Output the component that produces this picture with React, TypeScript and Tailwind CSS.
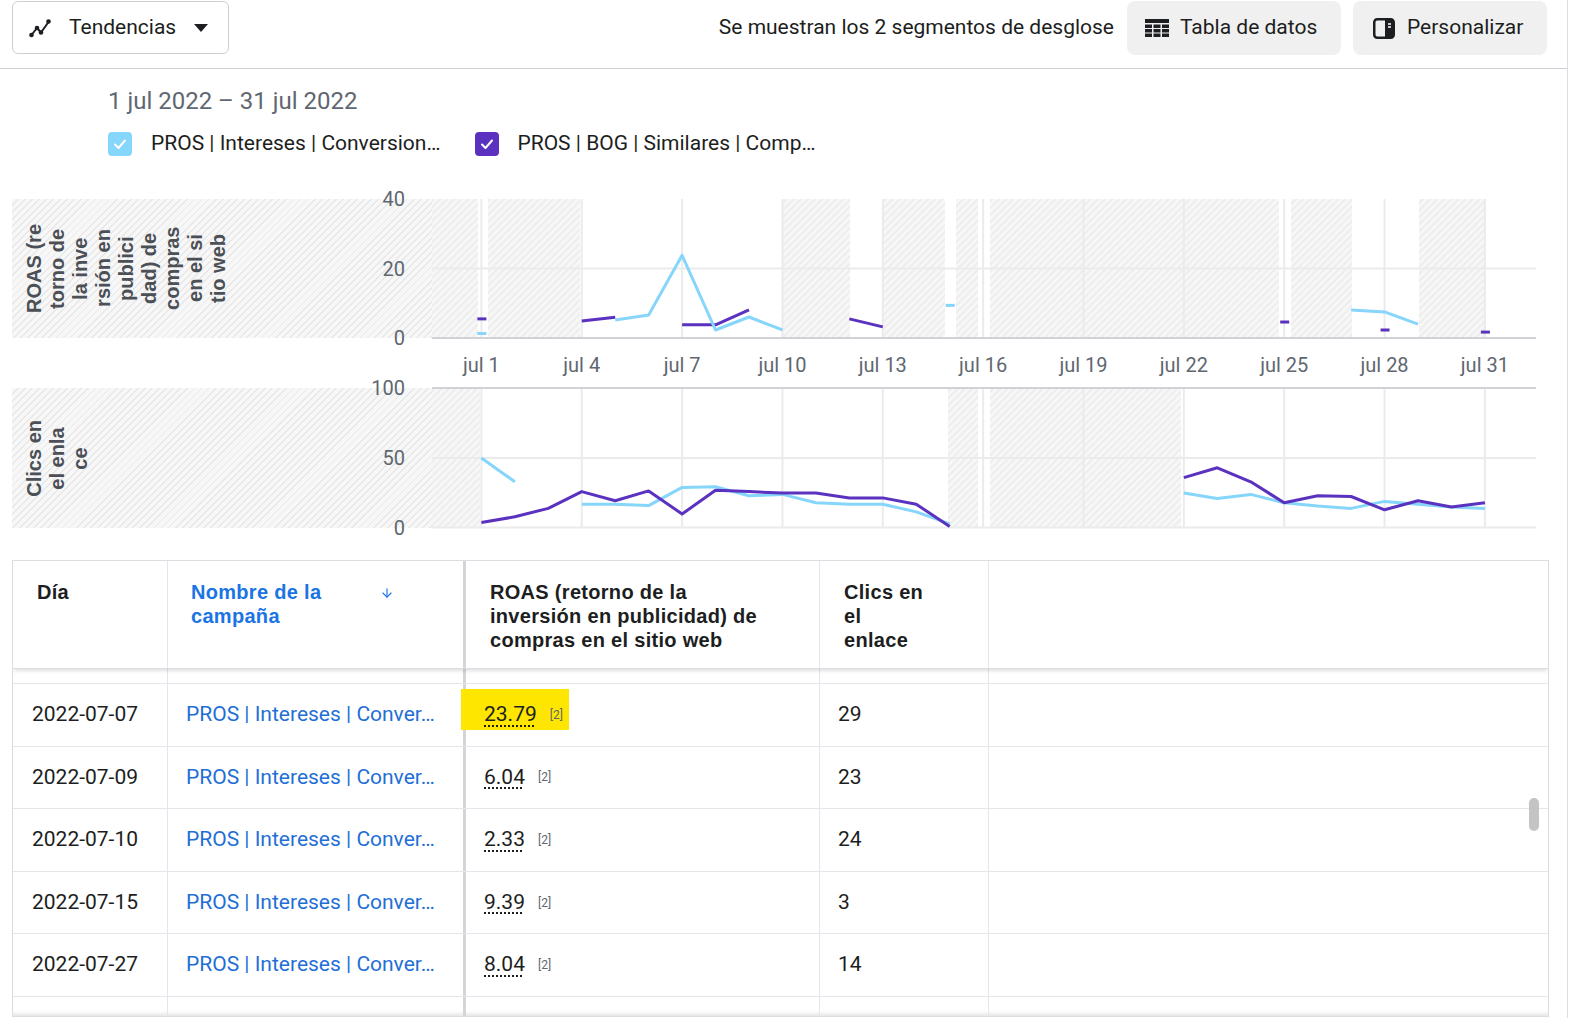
import { ArrowDown } from 'lucide-react';

type Pt = [number, number];

const BLUE = '#86d5fb';
const PURPLE = '#5a32bf';

// plot geometry (svg local coords: x 0 = page x 432, y 0 = page y 198)
const dayX = (d: number) => 49.4 + (d - 1) * 33.45;
const roasY = (v: number) => 139 - v * 3.475;
const clicksY = (v: number) => 329 - v * 1.4;

const roasBlue: Pt[][] = [
  [[1, 1.3]],
  [[5, 5.2], [6, 6.6], [7, 23.79], [8, 2.3], [9, 6.04], [10, 2.33]],
  [[15, 9.39]],
  [[27, 8.04], [28, 7.5], [29, 4.0]],
];
const roasPurple: Pt[][] = [
  [[1, 5.5]],
  [[4, 4.9], [5, 6.0]],
  [[7, 3.8], [8, 3.8], [9, 8.1]],
  [[12, 5.5], [13, 3.2]],
  [[25, 4.6]],
  [[28, 2.3]],
  [[31, 1.7]],
];
const clicksBlue: Pt[][] = [
  [[1, 50], [2, 33]],
  [[4, 17], [5, 17], [6, 16], [7, 29], [8, 29.5], [9, 23], [10, 24], [11, 18], [12, 17], [13, 17], [14, 11.5], [15, 3]],
  [[22, 25], [23, 21], [24, 24], [25, 18], [26, 15.7], [27, 14], [28, 19], [29, 17], [30, 15], [31, 14]],
];
const clicksPurple: Pt[][] = [
  [[1, 4], [2, 8], [3, 14], [4, 26], [5, 19.5], [6, 26.5], [7, 10], [8, 27], [9, 26], [10, 25], [11, 25], [12, 21.5], [13, 21.5], [14, 17], [15, 1]],
  [[22, 36], [23, 43], [24, 33], [25, 18], [26, 23], [27, 22.5], [28, 13], [29, 19.5], [30, 15], [31, 18]],
];

const hatchTop: Pt[] = [[0, 46], [56, 148], [351, 418], [451, 513], [524, 546], [558, 847], [859, 920], [987, 1053]];
const hatchBottom: Pt[] = [[0, 48], [516, 546], [558, 749]];
const tickDays = [1, 4, 7, 10, 13, 16, 19, 22, 25, 28, 31];

const rows = [
  { day: '2022-07-07', roas: '23.79', clicks: '29', highlight: true },
  { day: '2022-07-09', roas: '6.04', clicks: '23' },
  { day: '2022-07-10', roas: '2.33', clicks: '24' },
  { day: '2022-07-15', roas: '9.39', clicks: '3' },
  { day: '2022-07-27', roas: '8.04', clicks: '14' },
];

const col1 = 'w-[155px] shrink-0 border-r border-[#e4e6eb]';
const col2 = 'w-[298px] shrink-0 border-r-[3px] border-[#d3d5d8]';
const col3 = 'relative w-[354px] shrink-0 border-r border-[#e4e6eb]';
const col4 = 'w-[169px] shrink-0 border-r border-[#e4e6eb]';

function Series({ segments, yOf, color }: { segments: Pt[][]; yOf: (v: number) => number; color: string }) {
  return (
    <g fill="none" stroke={color} strokeWidth={3} strokeLinejoin="round">
      {segments.map((seg, i) =>
        seg.length === 1 ? (
          <line key={i} x1={dayX(seg[0][0]) - 4} x2={dayX(seg[0][0]) + 5} y1={yOf(seg[0][1])} y2={yOf(seg[0][1])} />
        ) : (
          <polyline key={i} points={seg.map(([d, v]) => `${dayX(d)},${yOf(v)}`).join(' ')} />
        ),
      )}
    </g>
  );
}

function AxisTitle({ lines }: { lines: string[] }) {
  return (
    <div className="rotate-180 whitespace-nowrap text-center font-['Liberation_Sans',Arial,sans-serif] text-[20px] font-bold leading-[23px] text-[#4b4f56] [writing-mode:vertical-rl]">
      {lines.map((l) => (
        <div key={l}>{l}</div>
      ))}
    </div>
  );
}

function Check({ color }: { color: string }) {
  return (
    <span className="flex h-6 w-6 items-center justify-center rounded-[4px]" style={{ backgroundColor: color }}>
      <svg width="16" height="16" viewBox="0 0 16 16" fill="none" stroke="white" strokeWidth="2" strokeLinecap="round" strokeLinejoin="round">
        <polyline points="3,8.5 6.5,12 13,4.5" />
      </svg>
    </span>
  );
}

function Chart() {
  return (
    <svg width={1104} height={329} className="block overflow-visible">
      <defs>
        <pattern id="hatch" width="5" height="5" patternUnits="userSpaceOnUse" patternTransform="rotate(45)">
          <rect width="5" height="5" fill="#f7f7f7" />
          <line x1="1" y1="0" x2="1" y2="5" stroke="#e8e8e8" strokeWidth="1.3" />
        </pattern>
      </defs>
      {hatchTop.map(([a, b]) => (
        <rect key={`t${a}`} x={a} y={0} width={b - a} height={139} fill="url(#hatch)" />
      ))}
      {hatchBottom.map(([a, b]) => (
        <rect key={`b${a}`} x={a} y={189} width={b - a} height={140} fill="url(#hatch)" />
      ))}
      <g stroke="#ebebeb" strokeWidth={2}>
        {tickDays.map((d) => (
          <line key={`g1${d}`} x1={dayX(d)} x2={dayX(d)} y1={0} y2={139} />
        ))}
        {tickDays.map((d) => (
          <line key={`g2${d}`} x1={dayX(d)} x2={dayX(d)} y1={189} y2={329} />
        ))}
        <line x1={0} x2={1104} y1={69.5} y2={69.5} />
        <line x1={0} x2={1104} y1={259} y2={259} />
        <line x1={0} x2={1104} y1={328.5} y2={328.5} />
      </g>
      <g stroke="#d0d2d6" strokeWidth={2}>
        <line x1={0} x2={1104} y1={139} y2={139} />
        <line x1={0} x2={1104} y1={189} y2={189} />
      </g>
      <Series segments={roasPurple} yOf={roasY} color={PURPLE} />
      <Series segments={roasBlue} yOf={roasY} color={BLUE} />
      <Series segments={clicksBlue} yOf={clicksY} color={BLUE} />
      <Series segments={clicksPurple} yOf={clicksY} color={PURPLE} />
      {tickDays.map((d) => (
        <text
          key={`l${d}`}
          x={dayX(d)}
          y={166}
          textAnchor="middle"
          dominantBaseline="central"
          fontSize={20}
          fill="#606770"
          fontFamily="Roboto, sans-serif"
        >
          jul {d}
        </text>
      ))}
    </svg>
  );
}

export default function App() {
  return (
    <div className="h-[1018px] w-[1568px] overflow-hidden border-r border-[#dadde1] bg-white font-['Roboto',sans-serif] text-[#1c1e21]">
      {/* toolbar */}
      <div className="flex h-[69px] items-start justify-between border-b border-[#ccd0d5] pl-3 pr-5 pt-px">
        <button className="flex h-[53px] w-[217px] items-center rounded-md border border-[#ccd0d5] bg-white pl-4 text-[21px]">
          <svg width="23" height="20" viewBox="0 0 23 20" fill="none" stroke="#1c1e21" strokeWidth="2" strokeLinejoin="round">
            <path d="M2.5 17 L8 10 L12 14.5 L19.5 4" />
            <circle cx="2.5" cy="17" r="2.3" fill="#1c1e21" stroke="none" />
            <circle cx="8" cy="10" r="2.3" fill="#1c1e21" stroke="none" />
            <circle cx="12" cy="14.5" r="2.3" fill="#1c1e21" stroke="none" />
            <circle cx="19.5" cy="3.5" r="2.3" fill="#1c1e21" stroke="none" />
          </svg>
          <span className="ml-[17px]">Tendencias</span>
          <svg className="ml-[18px]" width="14" height="8" viewBox="0 0 14 8">
            <path d="M0 0 H14 L7 8 Z" fill="#1c1e21" />
          </svg>
        </button>
        <div className="flex h-[54px] items-center text-[21px]">
          <span className="mr-[13px]">Se muestran los 2 segmentos de desglose</span>
          <button className="flex h-[54px] w-[214px] items-center rounded-lg bg-[#f0f0f0] pl-[18px]">
            <svg width="24" height="19" viewBox="0 0 24 19" fill="#1c1e21">
              <rect x="0" y="0" width="24" height="4" />
              {[5.5, 10, 14.5].map((y) =>
                [0, 8.5, 17].map((x) => <rect key={`${x}-${y}`} x={x} y={y} width="7" height="3.5" />),
              )}
            </svg>
            <span className="ml-[11px]">Tabla de datos</span>
          </button>
          <button className="ml-3 flex h-[54px] w-[194px] items-center rounded-lg bg-[#f0f0f0] pl-[20px]">
            <svg width="22" height="21" viewBox="0 0 22 21">
              <rect x="1.25" y="1.25" width="19.5" height="18.5" rx="3" fill="none" stroke="#1c1e21" strokeWidth="2.5" />
              <path d="M12 1.25 H17.75 A3 3 0 0 1 20.75 4.25 V16.75 A3 3 0 0 1 17.75 19.75 H12 Z" fill="#1c1e21" />
              <path d="M15 6 H18 M15 9 H18" stroke="white" strokeWidth="1.5" />
            </svg>
            <span className="ml-[12px]">Personalizar</span>
          </button>
        </div>
      </div>

      {/* date + legend */}
      <div className="mt-5 pl-[108px] text-[24px] leading-6 text-[#606770]">1 jul 2022 – 31 jul 2022</div>
      <div className="mt-[19px] flex h-6 items-center pl-[108px] text-[21px]">
        <Check color={BLUE} />
        <span className="ml-[19px]">PROS | Intereses | Conversion…</span>
        <span className="ml-[35px]">
          <Check color={PURPLE} />
        </span>
        <span className="ml-[18px]">PROS | BOG | Similares | Comp…</span>
      </div>

      {/* charts */}
      <div className="ml-3 mt-[43px] flex">
        <div className="flex w-[420px] shrink-0 flex-col">
          <div className="relative flex h-[139px] items-center bg-[repeating-linear-gradient(135deg,#f7f7f7_0px,#f7f7f7_3.7px,#e8e8e8_3.7px,#e8e8e8_5px)] pl-[11px]">
            <AxisTitle lines={['ROAS (re', 'torno de', 'la inve', 'rsión en', 'publici', 'dad) de', 'compras', 'en el si', 'tio web']} />
            <span className="absolute right-[27px] top-0 -translate-y-1/2 text-[20px] leading-6 text-[#606770]">40</span>
            <span className="absolute right-[27px] top-1/2 -translate-y-1/2 text-[20px] leading-6 text-[#606770]">20</span>
            <span className="absolute bottom-0 right-[27px] translate-y-1/2 text-[20px] leading-6 text-[#606770]">0</span>
          </div>
          <div className="h-[50px]" />
          <div className="relative flex h-[140px] items-center bg-[repeating-linear-gradient(135deg,#f7f7f7_0px,#f7f7f7_3.7px,#e8e8e8_3.7px,#e8e8e8_5px)] pl-[11px]">
            <AxisTitle lines={['Clics en', 'el enla', 'ce']} />
            <span className="absolute right-[27px] top-0 -translate-y-1/2 text-[20px] leading-6 text-[#606770]">100</span>
            <span className="absolute right-[27px] top-1/2 -translate-y-1/2 text-[20px] leading-6 text-[#606770]">50</span>
            <span className="absolute bottom-0 right-[27px] translate-y-1/2 text-[20px] leading-6 text-[#606770]">0</span>
          </div>
        </div>
        <Chart />
      </div>

      {/* table */}
      <div className="relative ml-3 mt-8 h-[457px] w-[1537px] overflow-hidden border border-[#dadde1] shadow-[inset_0_-5px_4px_-3px_rgba(0,0,0,0.12)]">
        <div className="relative z-10 flex h-[108px] border-b border-[#dadde1] bg-white font-['Liberation_Sans',Arial,sans-serif] text-[20px] font-bold leading-6 tracking-[0.3px] shadow-[0_3px_4px_-1px_rgba(0,0,0,0.13)]">
          <div className={`${col1} pl-[24px] pt-[19px]`}>Día</div>
          <div className={`${col2} flex pl-[23px] pt-[19px] text-[#1b74e4]`}>
            <span className="w-[189px]">
              Nombre de la
              <br />
              campaña
            </span>
            <ArrowDown className="mt-[6px]" size={14} strokeWidth={2} />
          </div>
          <div className={`${col3} pl-[24px] pt-[19px]`}>
            ROAS (retorno de la
            <br />
            inversión en publicidad) de
            <br />
            compras en el sitio web
          </div>
          <div className={`${col4} pl-[24px] pt-[19px]`}>
            Clics en
            <br />
            el
            <br />
            enlace
          </div>
          <div className="flex-1" />
        </div>

        <div className="flex h-[14px]">
          <div className={col1} />
          <div className={col2} />
          <div className={col3} />
          <div className={col4} />
          <div className="flex-1" />
        </div>
        {rows.map((r) => (
          <div key={r.day} className="flex h-[62.6px] border-t border-[#e4e6eb] text-[21px]">
            <div className={`${col1} flex items-center pl-[19px]`}>{r.day}</div>
            <div className={`${col2} flex items-center pl-[18px] text-[#1f6fd6]`}>PROS | Intereses | Conver…</div>
            <div className={`${col3} flex items-center pl-[18px]`}>
              {r.highlight && <div className="absolute -left-[5px] top-[5px] h-[41px] w-[108px] bg-[#ffe600]" />}
              <span className="relative underline decoration-dotted decoration-[1.5px] underline-offset-[4px]">{r.roas}</span>
              <span className="relative ml-[13px] text-[12px] text-[#606770]">[2]</span>
            </div>
            <div className={`${col4} flex items-center pl-[18px]`}>{r.clicks}</div>
            <div className="flex-1" />
          </div>
        ))}
        <div className="flex h-[40px] border-t border-[#e4e6eb]">
          <div className={col1} />
          <div className={col2} />
          <div className={col3} />
          <div className={col4} />
          <div className="flex-1" />
        </div>

        <div className="absolute right-[9px] top-[237px] h-[33px] w-[10px] rounded-full bg-[#c4c4c4]" />
      </div>
    </div>
  );
}
